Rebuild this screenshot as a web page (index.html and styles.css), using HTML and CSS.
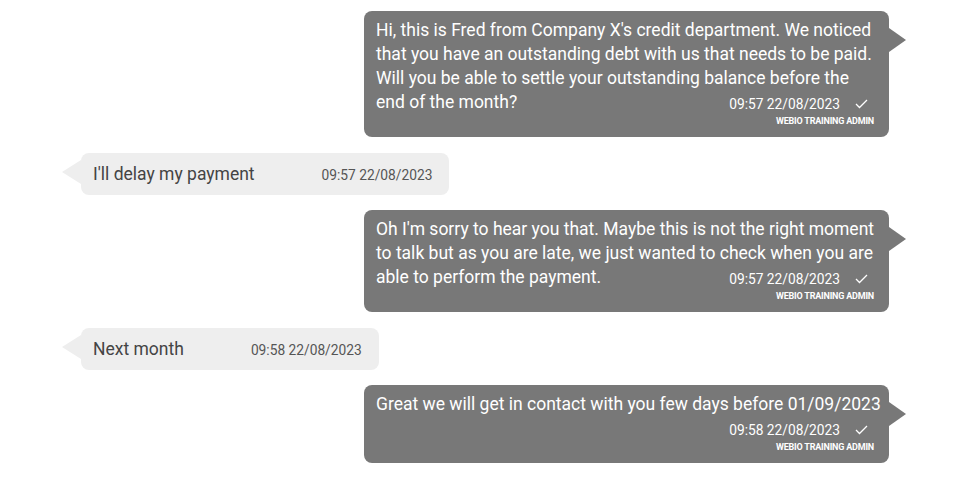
FILE: index.html
```html
<!DOCTYPE html>
<html>
<head>
<meta charset="utf-8">
<link rel="stylesheet" href="styles.css">
</head>
<body>
<div class="chat">
  <div class="row out">
    <div class="bubble out-bubble">
      <span class="tail-r"></span>
      Hi, this is Fred from Company X's credit department. We noticed that you have an outstanding debt with us that needs to be paid. Will you be able to settle your outstanding balance before the end of the month?<span class="meta"><span class="time-row"><span class="time">09:57 22/08/2023</span><svg class="check" width="13" height="10" viewBox="0 0 13 10"><polyline points="1,5 4.5,8.5 12,1" fill="none" stroke="#fff" stroke-width="1.3"/></svg></span><span class="author">WEBIO TRAINING ADMIN</span></span>
    </div>
  </div>
  <div class="row in">
    <div class="bubble in-bubble">
      <span class="tail-l"></span>
      <span class="in-text">I'll delay my payment</span>
      <span class="in-time">09:57 22/08/2023</span>
    </div>
  </div>
  <div class="row out">
    <div class="bubble out-bubble">
      <span class="tail-r"></span>
      Oh I'm sorry to hear you that. Maybe this is not the right moment to talk but as you are late, we just wanted to check when you are able to perform the payment.<span class="meta"><span class="time-row"><span class="time">09:57 22/08/2023</span><svg class="check" width="13" height="10" viewBox="0 0 13 10"><polyline points="1,5 4.5,8.5 12,1" fill="none" stroke="#fff" stroke-width="1.3"/></svg></span><span class="author">WEBIO TRAINING ADMIN</span></span>
    </div>
  </div>
  <div class="row in">
    <div class="bubble in-bubble">
      <span class="tail-l"></span>
      <span class="in-text">Next month</span>
      <span class="in-time">09:58 22/08/2023</span>
    </div>
  </div>
  <div class="row out">
    <div class="bubble out-bubble">
      <span class="tail-r"></span>
      Great we will get in contact with you few days before 01/09/2023<span class="meta"><span class="time-row"><span class="time">09:58 22/08/2023</span><svg class="check" width="13" height="10" viewBox="0 0 13 10"><polyline points="1,5 4.5,8.5 12,1" fill="none" stroke="#fff" stroke-width="1.3"/></svg></span><span class="author">WEBIO TRAINING ADMIN</span></span>
    </div>
  </div>
</div>
</body>
</html>
```

FILE: styles.css
```css
html, body {
  margin: 0;
  padding: 0;
  background: #ffffff;
  font-family: Roboto, "Liberation Sans", sans-serif;
}

.chat {
  display: flex;
  flex-direction: column;
  gap: 15.5px;
  padding-top: 11px;
}

.row {
  display: flex;
}

.row.out {
  justify-content: flex-end;
  padding-right: 68px;
}

.row.in {
  justify-content: flex-start;
  padding-left: 81px;
}

.bubble {
  position: relative;
  border-radius: 8px;
  font-size: 17.5px;
  line-height: 24px;
}

.out-bubble {
  display: flow-root;
  box-sizing: border-box;
  width: 525px;
  background: #787878;
  color: #ffffff;
  padding: 7px 7px 11px 12px;
}

.tail-r {
  position: absolute;
  right: -17px;
  top: 17px;
  width: 0;
  height: 0;
  border-top: 12.5px solid transparent;
  border-bottom: 12.5px solid transparent;
  border-left: 17px solid #787878;
}

.meta {
  float: right;
  display: flex;
  flex-direction: column;
  align-items: flex-end;
  margin-left: 12px;
  margin-right: 8px;
}

.time-row {
  display: flex;
  align-items: center;
  margin-top: 6px;
  height: 16px;
  padding-right: 6px;
}

.time {
  font-size: 13.75px;
  line-height: 16px;
}

.check {
  margin-left: 15px;
  display: block;
}

.author {
  margin-top: 4px;
  font-size: 9px;
  line-height: 10px;
  font-weight: 700;
  letter-spacing: -0.2px;
}

.in-bubble {
  display: flex;
  align-items: baseline;
  background: #eeeeee;
  color: #444444;
  padding: 9px 17px 9px 12px;
}

.tail-l {
  position: absolute;
  left: -19px;
  top: 7px;
  width: 0;
  height: 0;
  border-top: 12.5px solid transparent;
  border-bottom: 12.5px solid transparent;
  border-right: 19px solid #eeeeee;
}

.in-text {
  line-height: 24px;
}

.in-time {
  margin-left: 67px;
  font-size: 13.75px;
  line-height: 16px;
  color: #555555;
}
```
